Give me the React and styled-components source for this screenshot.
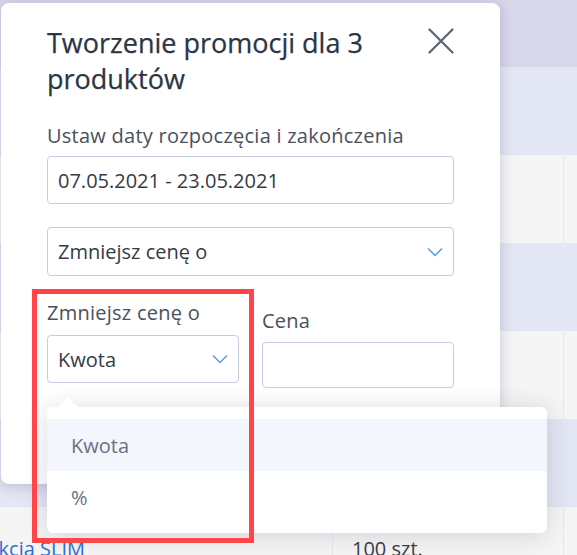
import React from 'react';
import styled, { createGlobalStyle } from 'styled-components';

// Globalne style strony
const GlobalStyle = createGlobalStyle`
  html, body {
    margin: 0;
    padding: 0;
    width: 577px;
    height: 555px;
    overflow: hidden;
    background: #f5f5f6;
    font-family: 'Open Sans', 'Noto Sans', sans-serif;
  }
`;

const Page = styled.div`
  position: relative;
  width: 577px;
  height: 555px;
  overflow: hidden;
`;

// Tabela w tle
const TableHeader = styled.div`
  height: 67px;
  background: #d9d7ea;
`;

const TableRow = styled.div`
  display: grid;
  grid-template-columns: 393px 231px 1fr;
  height: 88px;
  margin-left: -60px;
  background: ${({ $striped }) => ($striped ? '#e3e6f3' : '#f5f5f6')};
`;

const Cell = styled.div`
  display: flex;
  align-items: center;
  padding: 0 19px 6px 19px;
  border-right: 1px solid #e8e8ee;
  font-size: 20px;
  color: #3a3f4a;
  white-space: nowrap;
`;

const LinkCell = styled(Cell)`
  padding-left: 18px;
  color: #2f6fd0;
`;

// Modal
const Modal = styled.div`
  position: absolute;
  top: 3px;
  left: 1px;
  width: 499px;
  height: 481px;
  box-sizing: border-box;
  padding: 22px 46px 0 46px;
  background: #fff;
  border-radius: 8px;
  box-shadow: 0 2px 14px rgba(40, 40, 80, 0.22);
`;

const TitleRow = styled.div`
  display: flex;
  align-items: flex-start;
  justify-content: space-between;
`;

const Title = styled.h2`
  margin: 0;
  max-width: 370px;
  font-size: 27px;
  line-height: 36px;
  font-weight: 400;
  color: #2b3545;
  -webkit-text-stroke: 0.25px #2b3545;
`;

const CloseButton = styled.button`
  display: flex;
  margin: 3px 0 0 0;
  padding: 0;
  border: 0;
  background: none;
  cursor: pointer;
`;

const Label = styled.div`
  margin-top: ${({ $top }) => $top || 0}px;
  font-size: 20px;
  line-height: 24px;
  letter-spacing: 0.25px;
  color: #4a505e;
  white-space: nowrap;
`;

const Field = styled.div`
  display: flex;
  align-items: center;
  justify-content: space-between;
  box-sizing: border-box;
  height: ${({ $height }) => $height || 48}px;
  margin-top: ${({ $top }) => $top || 0}px;
  padding: 0 10px 0 10px;
  border: 1px solid #c8cce2;
  border-radius: 4px;
  font-size: 20px;
  color: #353b47;
`;

const Columns = styled.div`
  display: grid;
  grid-template-columns: 192px 192px;
  column-gap: 23px;
  margin-top: 25px;
`;

const Column = styled.div`
  padding-top: ${({ $offset }) => $offset || 0}px;
`;

// Lista rozwijana
const Dropdown = styled.div`
  position: absolute;
  top: 407px;
  left: 47px;
  width: 500px;
  height: 126px;
  box-sizing: border-box;
  padding: 12px 0;
  background: #fff;
  border-radius: 6px;
  box-shadow: 0 2px 26px rgba(30, 30, 60, 0.16);

  &:before {
    content: '';
    position: absolute;
    top: -10px;
    left: 11px;
    border-left: 10px solid transparent;
    border-right: 10px solid transparent;
    border-bottom: 10px solid #fff;
  }
`;

const Option = styled.div`
  display: flex;
  align-items: center;
  height: 52px;
  padding-left: 24px;
  font-size: 20px;
  color: #6b7082;
  background: ${({ $active }) => ($active ? '#f3f6fd' : '#fff')};
`;

// Czerwona ramka adnotacji
const Highlight = styled.div`
  position: absolute;
  top: 289px;
  left: 32px;
  width: 222px;
  height: 254px;
  box-sizing: border-box;
  border: 5px solid #ff4547;
`;

const Chevron = () => (
  <svg width="16" height="10" viewBox="0 0 16 10" fill="none">
    <path d="M1 1.5 L8 8.5 L15 1.5" stroke="#5b9be8" strokeWidth="1.5" />
  </svg>
);

const CloseIcon = () => (
  <svg width="26" height="26" viewBox="0 0 26 26" fill="none">
    <path d="M1.5 1.5 L24.5 24.5 M24.5 1.5 L1.5 24.5" stroke="#5a6276" strokeWidth="2.2" strokeLinecap="round" />
  </svg>
);

const rows = [
  { striped: true },
  { striped: false },
  { striped: true },
  { striped: false },
  { striped: true },
  { striped: false, name: 'Kolekcja SLIM', qty: '100 szt.' },
];

export default function App() {
  return (
    <Page>
      <GlobalStyle />
      <TableHeader />
      {rows.map((row, i) => (
        <TableRow key={i} $striped={row.striped}>
          <LinkCell>{row.name}</LinkCell>
          <Cell>{row.qty}</Cell>
          <Cell />
        </TableRow>
      ))}

      <Modal>
        <TitleRow>
          <Title>Tworzenie promocji dla 3 produktów</Title>
          <CloseButton aria-label="Zamknij">
            <CloseIcon />
          </CloseButton>
        </TitleRow>
        <Label $top={27}>Ustaw daty rozpoczęcia i zakończenia</Label>
        <Field $top={8}>07.05.2021 - 23.05.2021</Field>
        <Field $top={23} $height={49}>
          Zmniejsz cenę o
          <Chevron />
        </Field>
        <Columns>
          <Column>
            <Label>Zmniejsz cenę o</Label>
            <Field $top={10}>
              Kwota
              <Chevron />
            </Field>
          </Column>
          <Column $offset={8}>
            <Label>Cena</Label>
            <Field $top={9} $height={46} />
          </Column>
        </Columns>
      </Modal>

      <Dropdown>
        <Option $active>Kwota</Option>
        <Option>%</Option>
      </Dropdown>

      <Highlight />
    </Page>
  );
}
